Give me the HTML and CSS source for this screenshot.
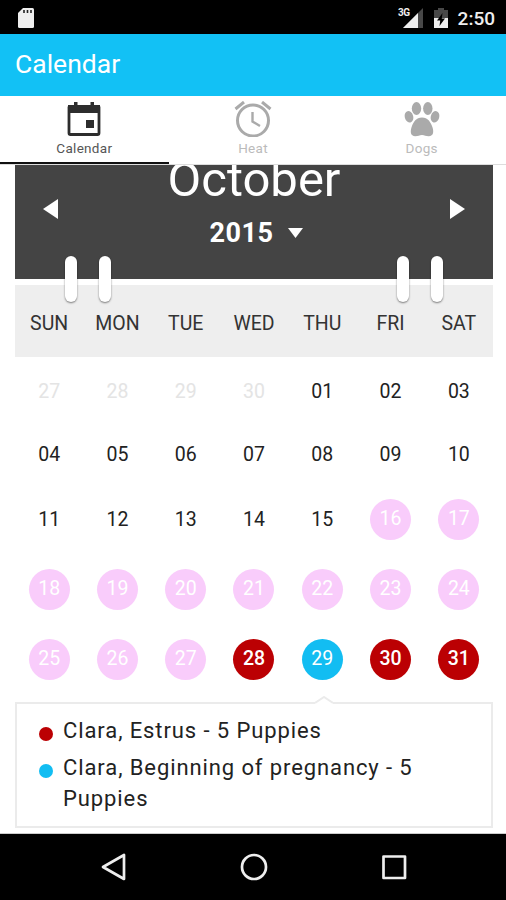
FILE: index.html
```html
<!DOCTYPE html>
<html lang="en">
<head>
<meta charset="utf-8">
<title>Calendar</title>
<link rel="stylesheet" href="styles.css">
</head>
<body>
<div class="phone">
  <div class="status">
    <svg class="sd" width="16" height="21" viewBox="0 0 16 21"><path d="M5 0h9.500a1.500 1.500 0 0 1 1.500 1.500v17a1.500 1.500 0 0 1-1.500 1.500h-13A1.500 1.500 0 0 1 0 18.500V5z" fill="#eee"/><path d="M6 2v3M9.500 2v3M13 2v3" stroke="#222" stroke-width="1.600"/></svg>
    <span class="net">3G</span>
    <svg class="signal" width="21" height="20" viewBox="0 0 21 20"><path d="M0 20L20 0v20z" fill="#484848"/><path d="M0 20L15 5v15z" fill="#eee"/></svg>
    <svg class="battery" width="14" height="20" viewBox="0 0 14 20"><path d="M4 0h6v2h4v8H0V2h4z" fill="#484848"/><path d="M0 10h14v10H0z" fill="#eee"/><path d="M8.500 5L3 12.500h3.200L5.500 18 11 10.500H7.800z" fill="#000"/></svg>
    <span class="clock">2:50</span>
  </div>
  <header class="appbar"><h1>Calendar</h1></header>
  <nav class="tabs">
    <div class="tab active">
      <svg width="34" height="36" viewBox="0 0 34 36"><path d="M2 7h30v25a1.500 1.500 0 0 1-1.500 1.500h-27A1.500 1.500 0 0 1 2 32z" fill="none" stroke="#2d2d2d" stroke-width="2.800"/><path d="M1 4h32v8H1zM7 1h3.500v5H7zM23.500 1H27v5h-3.500zM19 19h8v8h-8z" fill="#2d2d2d"/></svg>
      <span>Calendar</span>
    </div>
    <div class="tab">
      <svg width="38" height="36" viewBox="0 0 38 36"><g fill="none" stroke="#aaa" stroke-width="3"><circle cx="19" cy="19.500" r="15.500"/><path d="M1.500 8L10 1M28 1l8.500 7"/><path d="M18.500 11v9.500l7.500 4.500" stroke-width="2.400"/></g></svg>
      <span>Heat</span>
    </div>
    <div class="tab">
      <svg width="36" height="36" viewBox="0 0 36 36" fill="#aaa"><ellipse cx="12.500" cy="7.500" rx="4.700" ry="6.500"/><ellipse cx="23.800" cy="7.500" rx="4.700" ry="6.500"/><ellipse cx="5" cy="15.800" rx="4.200" ry="5.800" transform="rotate(-15 5 15.800)"/><ellipse cx="31" cy="15.800" rx="4.200" ry="5.800" transform="rotate(15 31 15.800)"/><path d="M18 16.500c6 0 8.500 4.500 10.200 9 1.800 4.800 1.500 9.700-3.500 9.700-3 0-4-1.300-6.700-1.300S14.300 35.200 11.300 35.200C6.300 35.200 6 30.300 7.800 25.500c1.700-4.500 4.200-9 10.200-9z"/></svg>
      <span>Dogs</span>
    </div>
  </nav>
  <main class="content">
    <section class="month">
      <svg class="arrow" width="15" height="20" viewBox="0 0 15 20"><path d="M0 10L15 0v20z" fill="#fff"/></svg>
      <div class="title">
        <h2>October</h2>
        <div class="year">2015<svg width="15" height="10" viewBox="0 0 15 10"><path d="M0 0h15L7.500 10z" fill="#fff"/></svg></div>
      </div>
      <svg class="arrow" width="15" height="20" viewBox="0 0 15 20"><path d="M15 10L0 0v20z" fill="#fff"/></svg>
      <i class="ring r1"></i><i class="ring r2"></i><i class="ring r3"></i><i class="ring r4"></i>
    </section>
    <div class="week">
      <span>SUN</span><span>MON</span><span>TUE</span><span>WED</span><span>THU</span><span>FRI</span><span>SAT</span>
    </div>
    <div class="days">
      <span class="out">27</span><span class="out">28</span><span class="out">29</span><span class="out">30</span><span>01</span><span>02</span><span>03</span>
      <span>04</span><span>05</span><span>06</span><span>07</span><span>08</span><span>09</span><span>10</span>
      <span>11</span><span>12</span><span>13</span><span>14</span><span>15</span><span><b>16</b></span><span><b>17</b></span>
      <span><b>18</b></span><span><b>19</b></span><span><b>20</b></span><span><b>21</b></span><span><b>22</b></span><span><b>23</b></span><span><b>24</b></span>
      <span><b>25</b></span><span><b>26</b></span><span><b>27</b></span><span><b class="red">28</b></span><span><b class="blue">29</b></span><span><b class="red">30</b></span><span><b class="red">31</b></span>
    </div>
    <section class="events">
      <svg class="notch" width="18" height="8" viewBox="0 0 18 8"><path d="M0 7L9 1l9 6v1H0z" fill="#fff"/><path d="M0 7L9 1l9 6" fill="none" stroke="#ebebeb" stroke-width="2"/></svg>
      <div class="event"><i class="dot red"></i><p>Clara, Estrus - 5 Puppies</p></div>
      <div class="event"><i class="dot blue"></i><p>Clara, Beginning of pregnancy - 5 Puppies</p></div>
    </section>
  </main>
  <footer class="navbar">
    <svg width="28" height="28" viewBox="0 0 28 28"><path d="M3 14L24 2v24z"/></svg>
    <svg width="28" height="28" viewBox="0 0 28 28"><circle cx="14" cy="14" r="12"/></svg>
    <svg width="28" height="28" viewBox="0 0 28 28"><path d="M3.500 3.500h21.500v21.500H3.500z"/></svg>
  </footer>
</div>
</body>
</html>
```
FILE: styles.css
```css
* { box-sizing: border-box; }
body { margin: 0; font-family: Roboto, "Liberation Sans", sans-serif; background: #fff; }
h1, h2, p { margin: 0; font-weight: 400; }
svg { display: block; flex: none; }
.phone { width: 506px; height: 900px; display: flex; flex-direction: column; overflow: hidden; }

.status { height: 34px; flex: none; background: #000; color: #eee; display: flex; align-items: flex-start; padding: 8px 11px 0 18px; }
.net { margin-left: auto; font-size: 10px; line-height: 10px; font-weight: 700; letter-spacing: -0.5px; margin-right: -7px; position: relative; z-index: 1; }
.battery { margin-left: 10px; }
.clock { margin-left: 10px; font-size: 19px; line-height: 21px; font-weight: 500; }

.appbar { height: 61.500px; flex: none; background: #12c1f5; color: #fff; padding: 0 0 2px 15px; display: flex; align-items: center; }
.appbar h1 { font-size: 26.500px; line-height: 32px; }

.tabs { height: 69.500px; flex: none; display: flex; border-bottom: 1px solid #ddd; }
.tab { flex: 1; display: flex; flex-direction: column; align-items: center; padding-top: 5px; font-size: 13.500px; color: #bbb; letter-spacing: .3px; border-bottom: 2px solid transparent; }
.tab span { line-height: 16px; margin-top: 3px; }
.tab.active { color: #555; border-color: #111; }

.content { flex: 1; padding: 0 13px 0 15px; overflow: hidden; border-bottom: 1px solid #ccc; }
.month { height: 114px; background: #444; color: #fff; display: flex; justify-content: space-between; padding: 0 28px; position: relative; }
.arrow { margin-top: 34px; }
.title { text-align: center; }
.title h2 { font-size: 49px; line-height: 58px; margin-top: -14px; font-weight: 400; }
.year { font-size: 27px; line-height: 32px; font-weight: 700; letter-spacing: .5px; margin-top: 8px; padding-left: 5px; display: flex; align-items: center; justify-content: center; gap: 15px; }
.ring { position: absolute; top: 91px; width: 12px; height: 46px; border-radius: 6px; background: #fff; box-shadow: 0 1px 2px rgba(0,0,0,.5); }
.r1 { left: 50px; } .r2 { left: 84px; } .r3 { left: 382px; } .r4 { left: 416px; }

.week { margin-top: 6px; height: 72px; background: #eee; display: grid; grid-template-columns: repeat(7, 1fr); text-align: center; font-size: 19.500px; line-height: 78px; color: #333; }
.days { display: grid; grid-template-columns: repeat(7, 1fr); grid-template-rows: 72px 54px 76px 64px 76px; margin-bottom: 3px; font-size: 19.500px; color: #222; }
.days > span { display: flex; align-items: center; justify-content: center; padding-bottom: 3px; }
.days > .out { color: #e4e4e4; }
.days b { width: 41px; height: 41px; border-radius: 50%; background: #f9ccfb; color: #fff; font-weight: 400; line-height: 39px; text-align: center; }
.days .red { font-weight: 500; }
.days .red, .dot.red { background: #bb0003; }
.days .blue, .dot.blue { background: #12bdf2; }

.events { position: relative; height: 126px; border: 2px solid #ebebeb; padding: 11px 22px 0; display: flex; flex-direction: column; gap: 6px; }
.notch { position: absolute; left: 298px; top: -8px; }
.event { display: flex; gap: 10px; }
.event p { font-size: 22px; line-height: 31px; letter-spacing: .900px; color: #222; }
.dot { flex: none; width: 14px; height: 14px; border-radius: 50%; margin-top: 12px; }

.navbar { height: 66px; flex: none; background: #000; display: flex; justify-content: space-between; align-items: center; padding: 0 98px 0 100px; }
.navbar svg { fill: none; stroke: #eee; stroke-width: 2.700; stroke-linejoin: round; }
```
